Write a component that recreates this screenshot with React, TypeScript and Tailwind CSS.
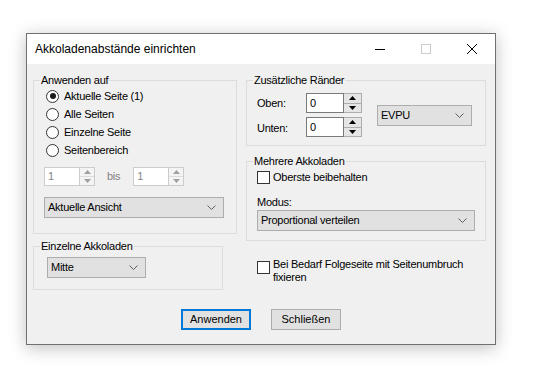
import React from 'react';

const Chevron = () => (
  <svg width="9" height="5" viewBox="0 0 9 5">
    <path d="M0.5 0.5 L4.5 4.5 L8.5 0.5" fill="none" stroke="#606060" strokeWidth="1" />
  </svg>
);

const Select: React.FC<{ label: string; className?: string }> = ({ label, className = '' }) => (
  <div
    className={`flex h-[21px] items-center justify-between border border-[#adadad] bg-[#e1e1e1] pl-[3px] pr-[7px] ${className}`}
  >
    <span>{label}</span>
    <Chevron />
  </div>
);

const Arrow: React.FC<{ up?: boolean; color: string }> = ({ up, color }) => (
  <svg width="7" height="4" viewBox="0 0 7 4">
    <path d={up ? 'M0 4 L3.5 0 L7 4 Z' : 'M0 0 L3.5 4 L7 0 Z'} fill={color} />
  </svg>
);

const Spinner: React.FC<{ value: string; disabled?: boolean }> = ({ value, disabled }) => {
  const line = disabled ? 'border-[#cccccc]' : 'border-[#7a7a7a]';
  const arrow = disabled ? '#a0a0a0' : '#000';
  return (
    <div className={`flex bg-white ${disabled ? 'h-[19px] w-[51px]' : 'h-[20px] w-[56px]'}`}>
      <div className={`flex flex-1 items-center border ${line} pl-[3px] ${disabled ? 'text-[#838383]' : ''}`}>
        {value}
      </div>
      <div className={`flex flex-col border ${disabled ? 'w-[15px] border-[#cccccc]' : 'w-[18px] border-[#adadad]'} border-l-0`}>
        <div className={`flex flex-1 items-center justify-center border-b ${disabled ? 'border-[#dcdcdc] bg-[#f4f4f4]' : 'border-[#adadad] bg-[#e5e5e5]'}`}>
          <Arrow up color={arrow} />
        </div>
        <div className={`flex flex-1 items-center justify-center ${disabled ? 'bg-[#f4f4f4]' : 'bg-[#e5e5e5]'}`}>
          <Arrow color={arrow} />
        </div>
      </div>
    </div>
  );
};

const Radio: React.FC<{ label: string; checked?: boolean }> = ({ label, checked }) => (
  <div className="flex h-[18px] items-center gap-[5px] pl-[2px]">
    <div className="flex h-[13px] w-[13px] items-center justify-center rounded-full border border-[#333333] bg-white">
      {checked && <div className="h-[6px] w-[6px] rounded-full bg-[#1a1a1a]" />}
    </div>
    <span>{label}</span>
  </div>
);

const Box = () => <div className="h-[13px] w-[13px] shrink-0 border border-[#333333] bg-white" />;

const Group: React.FC<{ title: string; className?: string; children: React.ReactNode }> = ({
  title,
  className = '',
  children,
}) => (
  <fieldset className={`border border-[#dcdcdc] ${className}`}>
    <legend className="ml-[6px] px-[1px] leading-[13px]">{title}</legend>
    {children}
  </fieldset>
);

export default function App() {
  return (
    <div className="min-h-[378px] bg-white pl-[26px] pt-[33px] font-[Liberation_Sans,Arial,sans-serif] text-[11px] text-black">
      <div className="flex h-[312px] w-[470px] flex-col border border-[#707070] bg-[#f0f0f0] shadow-[0_3px_16px_rgba(0,0,0,0.25)]">
        {/* title bar */}
        <div className="flex h-[30px] items-center bg-white">
          <span className="flex-1 pl-[8px] text-[12px]">Akkoladenabstände einrichten</span>
          <div className="flex h-full w-[46px] items-center justify-center">
            <div className="h-px w-[10px] bg-black" />
          </div>
          <div className="flex h-full w-[46px] items-center justify-center">
            <div className="h-[10px] w-[10px] border border-[#cccccc]" />
          </div>
          <div className="flex h-full w-[46px] items-center justify-center">
            <svg width="10" height="10" viewBox="0 0 10 10">
              <path d="M0 0 L10 10 M10 0 L0 10" stroke="#000" strokeWidth="1" />
            </svg>
          </div>
        </div>

        {/* body */}
        <div className="flex flex-1 flex-col pl-[6px] pt-[10px] tracking-[-0.25px]">
          <div className="flex gap-[9px]">
            <div className="flex w-[204px] flex-col">
              <Group title="Anwenden auf">
                <div className="flex flex-col pb-[15px] pl-[10px]">
                  <Radio label="Aktuelle Seite (1)" checked />
                  <Radio label="Alle Seiten" />
                  <Radio label="Einzelne Seite" />
                  <Radio label="Seitenbereich" />
                  <div className="mt-[8px] flex items-center">
                    <Spinner value="1" disabled />
                    <span className="ml-[12px] mr-[13px] text-[#838383]">bis</span>
                    <Spinner value="1" disabled />
                  </div>
                  <Select label="Aktuelle Ansicht" className="mt-[11px] w-[180px]" />
                </div>
              </Group>
              <Group title="Einzelne Akkoladen" className="mt-[6px] w-[190px]">
                <div className="pb-[11px] pl-[13px] pt-[4px]">
                  <Select label="Mitte" className="w-[99px]" />
                </div>
              </Group>
            </div>

            <div className="flex w-[240px] flex-col">
              <Group title="Zusätzliche Ränder">
                <div className="flex items-center pb-[8px] pl-[10px] pt-[6px]">
                  <div className="flex flex-col gap-[4px]">
                    <div className="flex items-center">
                      <span className="w-[49px]">Oben:</span>
                      <Spinner value="0" />
                    </div>
                    <div className="flex items-center">
                      <span className="w-[49px] pt-[3px]">Unten:</span>
                      <Spinner value="0" />
                    </div>
                  </div>
                  <Select label="EVPU" className="ml-[15px] w-[95px]" />
                </div>
              </Group>
              <Group title="Mehrere Akkoladen" className="mt-[9px]">
                <div className="flex flex-col pb-[9px] pl-[10px] pt-[1px]">
                  <div className="flex h-[16px] items-center gap-[3px]">
                    <Box />
                    <span>Oberste beibehalten</span>
                  </div>
                  <div className="mt-[10px] flex h-[14px] items-center">Modus:</div>
                  <Select label="Proportional verteilen" className="mt-[1px] w-[218px]" />
                </div>
              </Group>
              <div className="ml-[11px] mt-[20px] flex gap-[3px]">
                <Box />
                <span className="-mt-[3px] leading-[13px]">
                  Bei Bedarf Folgeseite mit Seitenumbruch
                  <br />
                  fixieren
                </span>
              </div>
            </div>
          </div>

          <div className="mt-auto flex justify-center gap-[20px] pb-[14px] pr-[6px]">
            <button className="h-[21px] w-[70px] border-2 border-[#0078d7] bg-[#e1e1e1] tracking-normal">Anwenden</button>
            <button className="h-[21px] w-[70px] border border-[#adadad] bg-[#e1e1e1] tracking-normal">Schließen</button>
          </div>
        </div>
      </div>
    </div>
  );
}
